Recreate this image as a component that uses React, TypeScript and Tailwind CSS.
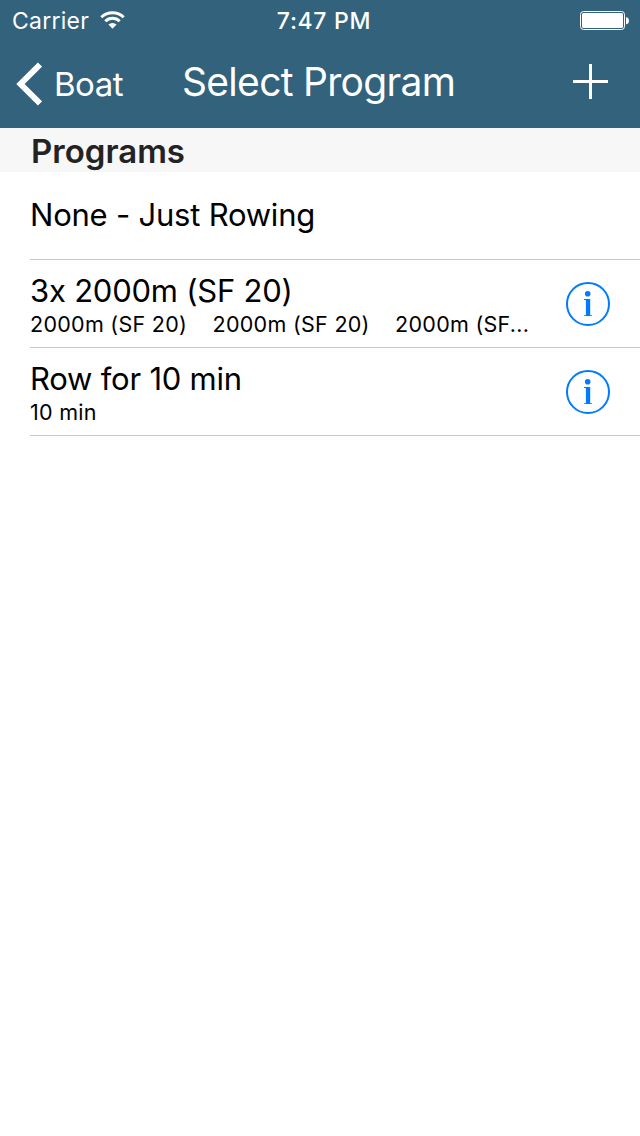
interface Program {
  title: string;
  detail?: string;
}

const programs: Program[] = [
  { title: 'None - Just Rowing' },
  { title: '3x 2000m (SF 20)', detail: '2000m (SF 20)    2000m (SF 20)    2000m (SF...' },
  { title: 'Row for 10 min', detail: '10 min' },
];

function StatusBar() {
  return (
    <div className="grid h-10 grid-cols-3 items-start pl-3 pr-[11px]">
      <div className="flex items-start gap-[11px]">
        <span className="text-[23px] leading-[42px] tracking-[0.25px]">Carrier</span>
        <svg className="mt-2.5" width="26" height="20" viewBox="0 0 26 20" fill="none" stroke="currentColor" strokeWidth="3">
          <path d="M1.3 7.2a16 16 0 0 1 22.4 0" />
          <path d="M5.3 11.2a10.2 10.2 0 0 1 14.4 0" />
          <path d="M12.5 18.8 8.4 14.6a6 6 0 0 1 8.2 0z" fill="currentColor" stroke="none" />
        </svg>
      </div>
      <span className="pl-[7px] text-center text-[23px] font-medium leading-[42px] tracking-[0.7px]">7:47 PM</span>
      <svg className="mt-[11px] justify-self-end" width="49" height="20" viewBox="0 0 49 20" fill="none">
        <rect x="0.5" y="0.5" width="44" height="18" rx="3" stroke="currentColor" />
        <rect x="2" y="2" width="41" height="15" rx="1.5" fill="currentColor" />
        <path d="M46 6.2c4 0 4 7 0 7z" fill="currentColor" />
      </svg>
    </div>
  );
}

function NavBar() {
  return (
    <div className="flex h-22 items-center pl-4 pr-8">
      <button className="flex items-center gap-3">
        <svg width="26" height="44" viewBox="0 0 26 44" fill="none" stroke="currentColor" strokeWidth="6">
          <path d="M24 2.5 4.5 22 24 41.5" />
        </svg>
        <span className="w-[70px] text-left text-[33px] leading-none tracking-[-0.5px]">Boat</span>
      </button>
      <h1 className="ml-[58px] pb-[5px] text-[39px] leading-none tracking-[-0.7px]">Select Program</h1>
      <button className="ml-auto pb-1.5" aria-label="Add program">
        <svg width="35" height="35" viewBox="0 0 35 35" fill="none" stroke="currentColor" strokeWidth="3">
          <path d="M0 17.5h35M17.5 0v35" />
        </svg>
      </button>
    </div>
  );
}

function InfoIcon() {
  return (
    <svg width="44" height="44" viewBox="0 0 44 44" fill="#007aff">
      <circle cx="22" cy="22" r="21" fill="none" stroke="#007aff" strokeWidth="2" />
      <circle cx="21.7" cy="11.8" r="2.8" />
      <path d="M18 17h6.2v16.2h1.8V34h-8v-.8h1.9V18H18z" />
    </svg>
  );
}

function ProgramRow({ program }: { program: Program }) {
  return (
    <li className="ml-[30px] flex h-22 items-center justify-between border-b border-[#c8c7cc] pr-[30px]">
      <div className={program.detail ? 'flex flex-col pt-0.5' : 'flex flex-col pb-0.5'}>
        <span className="text-[31px] leading-[38px] tracking-[-0.22px]">{program.title}</span>
        {program.detail && (
          <span className="whitespace-pre text-[21.5px] leading-7 tracking-[0.28px]">{program.detail}</span>
        )}
      </div>
      {program.detail && (
        <button aria-label="Program details">
          <InfoIcon />
        </button>
      )}
    </li>
  );
}

export default function App() {
  return (
    <div className="h-[1136px] w-[640px] overflow-hidden bg-white font-['Inter',sans-serif] text-black [font-feature-settings:'calt'_0]">
      <header className="bg-[#33627c] text-white">
        <StatusBar />
        <NavBar />
      </header>
      <h2 className="h-11 bg-[#f7f7f7] pl-[31px] text-[33px] font-semibold leading-[46px] text-[#232323]">Programs</h2>
      <ul>
        {programs.map((program) => (
          <ProgramRow key={program.title} program={program} />
        ))}
      </ul>
    </div>
  );
}
